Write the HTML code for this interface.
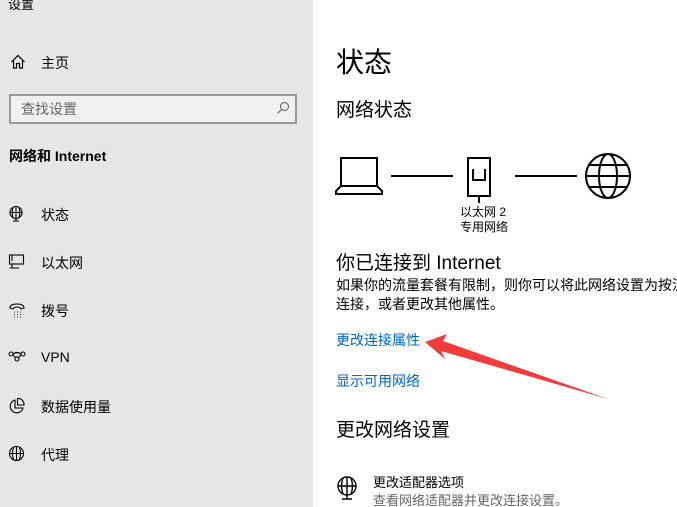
<!DOCTYPE html>
<html><head><meta charset="utf-8"><style>
*{margin:0;padding:0;box-sizing:border-box}
html,body{width:677px;height:507px;overflow:hidden}
body{background:#fff;font-family:"Liberation Sans","Noto Sans CJK SC",sans-serif;color:#000;position:relative}
.side{position:absolute;left:0;top:0;width:313px;height:507px;background:#e6e6e6}
.a{position:absolute;white-space:nowrap}
.nav{font-size:14px}
.ic{position:absolute}
.link{color:#0067c0;font-size:14px}
</style></head><body>
<div class="side">
<div class="a" style="left:8px;top:-6px;font-size:13px">设置</div>
<svg class="ic" style="left:10px;top:54px" width="16" height="16" viewBox="0 0 16 16" fill="none" stroke="#000" stroke-width="1.2"><path d="M1.5 8 L8 1.5 L14.5 8 M3.5 6.5 V14 H6.5 V9.5 H9.5 V14 H12.5 V6.5"/></svg>
<div class="a nav" style="left:41px;top:53px">主页</div>
<div style="position:absolute;left:9px;top:94px;width:288px;height:30px;border:2px solid #999;background:#f0f0f0"></div>
<div class="a" style="left:21px;top:99px;font-size:14px;color:#666">查找设置</div>
<svg class="ic" style="left:276px;top:101px" width="14" height="14" viewBox="0 0 14 14" fill="none" stroke="#555" stroke-width="1"><circle cx="8.5" cy="5.5" r="4"/><path d="M5.5 8.5 L1.5 12.5"/></svg>
<div class="a" style="left:9px;top:146px;font-size:14px;font-weight:bold">网络和 Internet</div>
<svg class="ic" style="left:8px;top:205px" width="18" height="18" viewBox="0 0 18 18" fill="none" stroke="#000" stroke-width="1.1"><circle cx="8" cy="7.5" r="6"/><path d="M2 7.5H14M8 1.5V13.5M5 2.5Q3.5 7.5 5 12.5M11 2.5Q12.5 7.5 11 12.5M8 13.5V16M5 16H11"/></svg>
<div class="a nav" style="left:41px;top:205px">状态</div>
<svg class="ic" style="left:8px;top:253px" width="18" height="18" viewBox="0 0 18 18" fill="none" stroke="#000" stroke-width="1.1"><rect x="1.5" y="2" width="14" height="9"/><path d="M4 2V8M4 11V15M1.5 15H11"/></svg>
<div class="a nav" style="left:41px;top:253px">以太网</div>
<svg class="ic" style="left:8px;top:302px" width="18" height="18" viewBox="0 0 18 18" fill="none" stroke="#000" stroke-width="1.1"><path d="M2 6Q2 2 9 2Q16 2 16 6L13 7Q12 5 9 5Q6 5 5 7Z"/><path d="M6 10h.8M9 10h.8M12 10h.8M6 12.5h.8M9 12.5h.8M12 12.5h.8M6 15h.8M9 15h.8M12 15h.8"/></svg>
<div class="a nav" style="left:41px;top:301px">拨号</div>
<svg class="ic" style="left:8px;top:350px" width="18" height="14" viewBox="0 0 18 14" fill="none" stroke="#000" stroke-width="1.1"><circle cx="3" cy="4" r="2"/><circle cx="15" cy="4" r="2"/><circle cx="9" cy="9" r="2"/><path d="M5 4Q9 1 13 4M5 5L8 8M13 5L10 8"/></svg>
<div class="a nav" style="left:41px;top:349px">VPN</div>
<svg class="ic" style="left:8px;top:397px" width="18" height="18" viewBox="0 0 18 18" fill="none" stroke="#000" stroke-width="1.1"><path d="M7 3A6.5 6.5 0 1 0 15 11H7Z"/><path d="M9.5 1.5A6 6 0 0 1 16 8H9.5Z"/></svg>
<div class="a nav" style="left:41px;top:397px">数据使用量</div>
<svg class="ic" style="left:8px;top:445px" width="18" height="18" viewBox="0 0 18 18" fill="none" stroke="#000" stroke-width="1.1"><circle cx="8.5" cy="8.5" r="7"/><path d="M1.5 8.5H15.5M8.5 1.5V15.5M5.5 2.5Q3.5 8.5 5.5 14.5M11.5 2.5Q13.5 8.5 11.5 14.5"/></svg>
<div class="a nav" style="left:41px;top:445px">代理</div>
</div>

<div class="a" style="left:336px;top:41px;font-size:28px">状态</div>
<div class="a" style="left:336px;top:95px;font-size:19px">网络状态</div>

<svg class="ic" style="left:335px;top:150px" width="300" height="56" viewBox="0 0 300 56" fill="none" stroke="#000" stroke-width="2">
<path d="M6 8H42V36H6Z"/><path d="M6 36L1 41V44H47V41L42 36"/>
<path d="M56 26H118"/>
<path d="M133 8H155V46H133Z"/><path d="M138 19V30H150V19"/><path d="M144 46V53"/>
<path d="M180 26H242"/>
<circle cx="273" cy="26" r="22"/><ellipse cx="273" cy="26" rx="9" ry="22"/><path d="M251 26H295M254 15H292M254 37H292"/>
</svg>
<div class="a" style="left:460px;top:203px;font-size:12px">以太网 2</div>
<div class="a" style="left:460px;top:218px;font-size:12px">专用网络</div>

<div class="a" style="left:336px;top:248px;font-size:19px">你已连接到 Internet</div>
<div style="position:absolute;left:336px;top:276px;width:341px;height:42px;overflow:hidden;font-size:14px;line-height:19px;white-space:nowrap">如果你的流量套餐有限制，则你可以将此网络设置为按流量<br>连接，或者更改其他属性。</div>
<div class="a link" style="left:336px;top:330px">更改连接属性</div>
<div class="a link" style="left:336px;top:371px">显示可用网络</div>
<div class="a" style="left:336px;top:415px;font-size:19px">更改网络设置</div>
<svg class="ic" style="left:336px;top:476px" width="24" height="24" viewBox="0 0 24 24" fill="none" stroke="#000" stroke-width="1.4"><circle cx="11" cy="10" r="9"/><path d="M2 10H20M11 1V19M7 2Q4 10 7 18M15 2Q18 10 15 18M11 19V23M6 23H16"/></svg>
<div class="a" style="left:373px;top:472px;font-size:13px">更改适配器选项</div>
<div class="a" style="left:373px;top:490px;font-size:13px;color:#666">查看网络适配器并更改连接设置。</div>

<svg class="ic" style="left:0;top:0" width="677" height="507"><path d="M425 342L447 334L443 341L608 399L441 351L445 359Z" fill="#f23b3b"/></svg>
</body></html>
